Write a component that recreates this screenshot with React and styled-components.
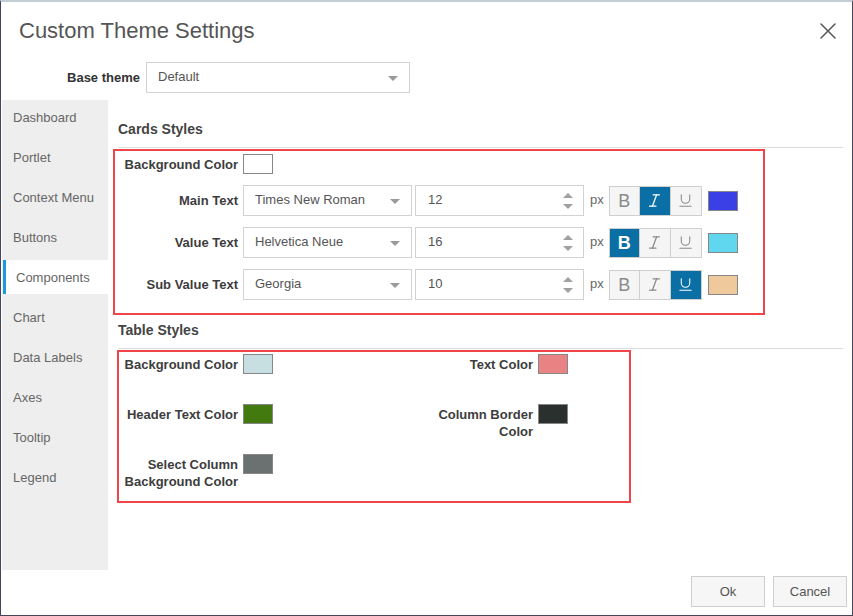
import React from "react";
import styled, { createGlobalStyle } from "styled-components";
import { X, Italic, Underline } from "lucide-react";

const GlobalStyle = createGlobalStyle`
  html, body {
    margin: 0;
    padding: 0;
    background: #fff;
  }
  body {
    font-family: "Liberation Sans", Arial, Helvetica, sans-serif;
  }
`;

const navItems = [
  "Dashboard",
  "Portlet",
  "Context Menu",
  "Buttons",
  "Components",
  "Chart",
  "Data Labels",
  "Axes",
  "Tooltip",
  "Legend",
];

const fontRows = [
  { label: "Main Text", font: "Times New Roman", size: 12, active: "i", color: "#3b40e6" },
  { label: "Value Text", font: "Helvetica Neue", size: 16, active: "b", color: "#60d6ef" },
  { label: "Sub Value Text", font: "Georgia", size: 10, active: "u", color: "#efc89c" },
];

const tableColors = [
  { label: "Background Color", color: "#c7dfe0" },
  { label: "Text Color", color: "#e98383" },
  { label: "Header Text Color", color: "#437a10" },
  { label: "Column Border Color", color: "#2a302e" },
  { label: "Select Column Background Color", color: "#6b7170" },
];

const App = () => {
  return (
    <>
      <GlobalStyle />
      <Frame>
        <Header>
          <Title>Custom Theme Settings</Title>
          <Close aria-label="Close">
            <X size={28} strokeWidth={1.3} />
          </Close>
        </Header>

        <BaseRow>
          <BaseLabel>Base theme</BaseLabel>
          <Select $width={264}>
            <span>Default</span>
            <Caret />
          </Select>
        </BaseRow>

        <Body>
          <Sidebar>
            {navItems.map((item) => (
              <NavItem key={item} $active={item === "Components"}>
                {item}
              </NavItem>
            ))}
          </Sidebar>

          <Content>
            <SectionTitle>Cards Styles</SectionTitle>
            <CardsBox>
              <BgRow>
                <Label>Background Color</Label>
                <Swatch $color="#ffffff" />
              </BgRow>
              {fontRows.map((row) => (
                <FontRow key={row.label}>
                  <Label>{row.label}</Label>
                  <Select $width={169}>
                    <span>{row.font}</span>
                    <Caret />
                  </Select>
                  <NumberBox>
                    <span>{row.size}</span>
                    <Spinner>
                      <Up />
                      <Down />
                    </Spinner>
                  </NumberBox>
                  <Unit>px</Unit>
                  <ToggleGroup>
                    <Toggle $active={row.active === "b"}>
                      <BoldGlyph $active={row.active === "b"}>B</BoldGlyph>
                    </Toggle>
                    <Toggle $active={row.active === "i"}>
                      <Italic size={17} strokeWidth={1.8} />
                    </Toggle>
                    <Toggle $active={row.active === "u"}>
                      <Underline size={17} strokeWidth={1.5} />
                    </Toggle>
                  </ToggleGroup>
                  <Swatch $color={row.color} $gap={6} />
                </FontRow>
              ))}
            </CardsBox>

            <SectionTitle $top={6}>Table Styles</SectionTitle>
            <TableBox>
              <ColorGrid>
                {tableColors.map((c, i) => (
                  <ColorCell key={c.label}>
                    <GridLabel $width={i % 2 === 0 ? 118 : 100}>{c.label}</GridLabel>
                    <Swatch $color={c.color} />
                  </ColorCell>
                ))}
              </ColorGrid>
            </TableBox>
          </Content>
        </Body>

        <Footer>
          <FooterButton>Ok</FooterButton>
          <FooterButton>Cancel</FooterButton>
        </Footer>
      </Frame>
    </>
  );
};

export default App;

const Frame = styled.div`
  width: 853px;
  height: 616px;
  box-sizing: border-box;
  border: 1px solid #47435a;
  border-top: 2px solid #c3ced6;
  background: #fff;
  display: flex;
  flex-direction: column;
  overflow: hidden;
`;

const Header = styled.div`
  display: flex;
  align-items: center;
  justify-content: space-between;
  padding: 16px 10px 0 18px;
  height: 26px;
`;

const Title = styled.h1`
  margin: 0;
  font-size: 22px;
  font-weight: normal;
  line-height: 26px;
  color: #555;
`;

const Close = styled.div`
  display: flex;
  color: #5a5a5a;
`;

const BaseRow = styled.div`
  display: flex;
  align-items: center;
  margin-top: 18px;
`;

const BaseLabel = styled.div`
  width: 139px;
  text-align: right;
  margin-right: 6px;
  font-size: 13px;
  font-weight: bold;
  color: #333;
`;

const Select = styled.div`
  width: ${(p) => p.$width}px;
  height: 31px;
  box-sizing: border-box;
  border: 1px solid #d2d2d2;
  background: #fff;
  display: flex;
  align-items: center;
  justify-content: space-between;
  padding: 0 11px 2px 11px;
  font-size: 13px;
  color: #555;
`;

const Caret = styled.i`
  width: 0;
  height: 0;
  margin-top: 3px;
  border-left: 5px solid transparent;
  border-right: 5px solid transparent;
  border-top: 5px solid #9a9a9a;
`;

const Body = styled.div`
  flex: 1;
  display: flex;
  margin-top: 7px;
  min-height: 0;
`;

const Sidebar = styled.div`
  width: 106px;
  margin-left: 1px;
  background: #eeeeee;
`;

const NavItem = styled.div`
  height: 34px;
  margin-bottom: 6px;
  display: flex;
  align-items: center;
  box-sizing: border-box;
  padding-left: ${(p) => (p.$active ? "10px" : "11px")};
  margin-left: ${(p) => (p.$active ? "1px" : "0")};
  border-left: ${(p) => (p.$active ? "3px solid #1b9ae0" : "none")};
  background: ${(p) => (p.$active ? "#fff" : "transparent")};
  font-size: 13px;
  color: #666;
`;

const Content = styled.div`
  flex: 1;
  padding: 20px 9px 0 10px;
`;

const SectionTitle = styled.h2`
  margin: ${(p) => p.$top || 0}px 0 0 0;
  padding-bottom: 9px;
  border-bottom: 1px solid #dedede;
  font-size: 14px;
  line-height: 18px;
  font-weight: bold;
  color: #444;
`;

const CardsBox = styled.div`
  width: 652px;
  box-sizing: border-box;
  margin: 1px 0 0 -5px;
  border: 2px solid #f0464a;
  padding: 3px 10px 13px 5px;
`;

const BgRow = styled.div`
  display: flex;
  align-items: center;
  height: 20px;
`;

const Label = styled.div`
  width: 118px;
  flex-shrink: 0;
  margin-right: 5px;
  text-align: right;
  font-size: 13px;
  font-weight: bold;
  color: #3d3d3d;
  white-space: nowrap;
`;

const Swatch = styled.div`
  width: 30px;
  height: 20px;
  box-sizing: border-box;
  flex-shrink: 0;
  margin-left: ${(p) => p.$gap || 0}px;
  border: 1px solid #878787;
  background: ${(p) => p.$color};
`;

const FontRow = styled.div`
  display: flex;
  align-items: center;
  margin-top: 11px;
  height: 31px;
`;

const NumberBox = styled.div`
  width: 169px;
  height: 31px;
  box-sizing: border-box;
  margin-left: 3px;
  border: 1px solid #d2d2d2;
  display: flex;
  align-items: center;
  justify-content: space-between;
  padding: 0 10px 2px 12px;
  font-size: 13px;
  color: #555;
`;

const Spinner = styled.div`
  display: flex;
  flex-direction: column;
  gap: 6px;
  margin-top: 2px;
`;

const Up = styled.i`
  width: 0;
  height: 0;
  border-left: 5px solid transparent;
  border-right: 5px solid transparent;
  border-bottom: 5px solid #a0a0a0;
`;

const Down = styled.i`
  width: 0;
  height: 0;
  border-left: 5px solid transparent;
  border-right: 5px solid transparent;
  border-top: 5px solid #a0a0a0;
`;

const Unit = styled.span`
  margin: 0 5px 3px 6px;
  font-size: 13px;
  color: #666;
`;

const ToggleGroup = styled.div`
  display: flex;
  height: 30px;
`;

const Toggle = styled.div`
  width: 31px;
  height: 30px;
  box-sizing: border-box;
  display: flex;
  align-items: center;
  justify-content: center;
  border: 1px solid #cfcfcf;
  border-left: none;
  &:first-child {
    width: 31px;
    border-left: 1px solid #cfcfcf;
  }
  background: ${(p) => (p.$active ? "#0a6fa4" : "#f5f5f5")};
  color: ${(p) => (p.$active ? "#fff" : "#8a8a8a")};
`;

const BoldGlyph = styled.span`
  font-size: 18px;
  line-height: 1;
  font-weight: ${(p) => (p.$active ? "bold" : "normal")};
`;

const TableBox = styled.div`
  width: 514px;
  box-sizing: border-box;
  margin: 1px 0 0 -1px;
  border: 2px solid #f0464a;
  padding: 2px 10px 11px 1px;
`;

const ColorGrid = styled.div`
  display: grid;
  grid-template-columns: 313px 1fr;
  grid-template-rows: 50px 50px auto;
`;

const ColorCell = styled.div`
  display: flex;
  align-items: flex-start;
`;

const GridLabel = styled.div`
  width: ${(p) => p.$width}px;
  flex-shrink: 0;
  margin-right: 5px;
  padding-top: 2px;
  text-align: right;
  font-size: 13px;
  line-height: 17px;
  font-weight: bold;
  color: #3d3d3d;
`;

const Footer = styled.div`
  height: 45px;
  box-sizing: border-box;
  display: flex;
  justify-content: flex-end;
  gap: 8px;
  padding: 6px 5px 0 0;
`;

const FooterButton = styled.button`
  width: 74px;
  height: 31px;
  box-sizing: border-box;
  border: 1px solid #cfcfcf;
  border-radius: 0;
  background: #f6f6f6;
  font-family: "Liberation Sans", Arial, sans-serif;
  font-size: 13px;
  color: #555;
`;
